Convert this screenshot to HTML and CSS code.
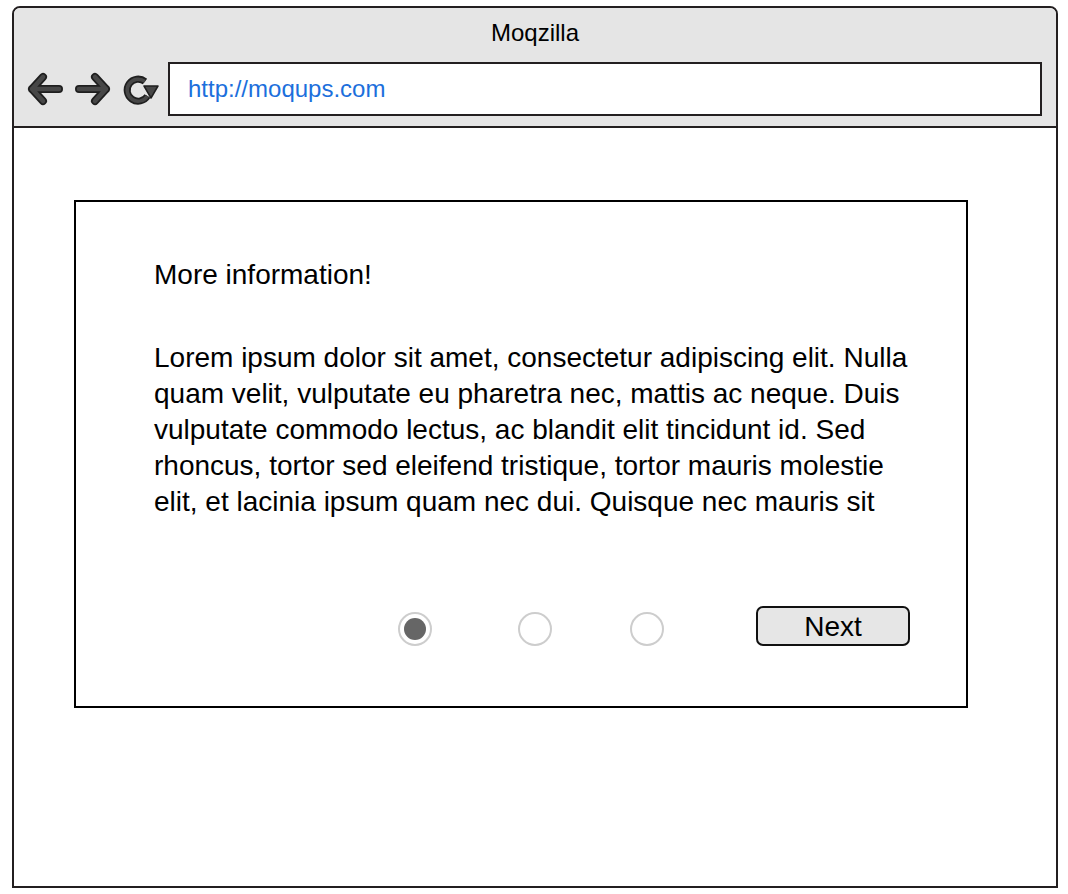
FILE: index.html
```html
<!DOCTYPE html>
<html lang="en">
  <head>
    <meta charset="UTF-8" />
    <title>Moqzilla</title>
    <link rel="stylesheet" href="styles.css">
  </head>
  <body>
    <div class="window">
      <!-- browser chrome -->
      <div class="header">
        <div class="title">Moqzilla</div>
        <div class="toolbar">
          <div class="icons">
            <svg class="icon" width="34" height="34" viewBox="0 0 34 34">
              <path d="M31 17 H4 M15 5 L4 17 L15 29" fill="none" stroke="#1f1f1f" stroke-width="8" stroke-linecap="round" stroke-linejoin="round" />
              <path d="M31 17 H4 M15 5 L4 17 L15 29" fill="none" stroke="#474747" stroke-width="4.5" stroke-linecap="round" stroke-linejoin="round" />
            </svg>
            <svg class="icon" width="34" height="34" viewBox="0 0 34 34">
              <path d="M3 17 H30 M19 5 L30 17 L19 29" fill="none" stroke="#1f1f1f" stroke-width="8" stroke-linecap="round" stroke-linejoin="round" />
              <path d="M3 17 H30 M19 5 L30 17 L19 29" fill="none" stroke="#474747" stroke-width="4.5" stroke-linecap="round" stroke-linejoin="round" />
            </svg>
            <svg class="icon" width="34" height="34" viewBox="0 0 34 34">
              <path d="M21 9.5 A11 11 0 1 0 23.5 24" fill="none" stroke="#1f1f1f" stroke-width="7" />
              <path d="M21 9.5 A11 11 0 1 0 23.5 24" fill="none" stroke="#474747" stroke-width="3.5" />
              <path d="M20 14 L34 14 L27 26 Z" fill="#474747" stroke="#1f1f1f" stroke-width="1.5" stroke-linejoin="round" />
            </svg>
          </div>
          <div class="address">http://moqups.com</div>
        </div>
      </div>

      <!-- page content -->
      <div class="content">
        <div class="card">
          <div class="card-title">More information!</div>
          <p class="card-text">Lorem ipsum dolor sit amet, consectetur adipiscing elit. Nulla quam velit, vulputate eu pharetra nec, mattis ac neque. Duis vulputate commodo lectus, ac blandit elit tincidunt id. Sed rhoncus, tortor sed eleifend tristique, tortor mauris molestie elit, et lacinia ipsum quam nec dui. Quisque nec mauris sit</p>
          <div class="pager">
            <span class="dot dot-1 active"></span>
            <span class="dot dot-2"></span>
            <span class="dot dot-3"></span>
            <div class="btn">Next</div>
          </div>
        </div>
      </div>
    </div>
  </body>
</html>
```

FILE: styles.css
```css
body {
  margin: 0;
  padding: 0;
  background-color: #fff;
  font-family: "Liberation Sans", Arial, sans-serif;
  color: #000;
}

.window {
  width: 1046px;
  height: 882px;
  margin: 6px 0 0 12px;
  box-sizing: border-box;
  border: 2px solid #231f20;
  border-radius: 8px 8px 0 0;
  overflow: hidden;
}

.header {
  height: 120px;
  padding: 13px 14px 0 14px;
  box-sizing: border-box;
  background-color: #e5e5e5;
  border-bottom: 2px solid #231f20;
}

.title {
  font-size: 24px;
  line-height: 24px;
  text-align: center;
}

.toolbar {
  display: flex;
  align-items: center;
  margin-top: 17px;
  height: 54px;
}

.icons {
  display: flex;
  gap: 14px;
  margin-right: 10px;
}

.icon {
  display: block;
  overflow: visible;
}

.address {
  flex: 1;
  height: 54px;
  box-sizing: border-box;
  border: 2px solid #231f20;
  background-color: #fff;
  padding-left: 18px;
  font-size: 24px;
  line-height: 50px;
  color: #1c6fdc;
}

.content {
  padding: 72px 0 0 60px;
}

.card {
  width: 894px;
  height: 508px;
  box-sizing: border-box;
  border: 2px solid #000;
  padding: 55px 0 0 78px;
}

.card-title {
  font-size: 28px;
  line-height: 36px;
}

.card-text {
  width: 765px;
  height: 180px;
  margin: 47px 0 0 0;
  font-size: 28px;
  line-height: 36px;
}

.pager {
  display: flex;
  align-items: flex-end;
  margin-top: 86px;
  height: 40px;
}

.dot {
  display: block;
  width: 34px;
  height: 34px;
  box-sizing: border-box;
  border: 2px solid #cdcdcd;
  border-radius: 50%;
  position: relative;
}

.dot.active::after {
  content: "";
  position: absolute;
  left: 4px;
  top: 4px;
  width: 22px;
  height: 22px;
  border-radius: 50%;
  background-color: #666;
}

.dot-1 {
  margin-left: 244px;
}

.dot-2 {
  margin-left: 86px;
}

.dot-3 {
  margin-left: 78px;
}

.btn {
  width: 154px;
  height: 40px;
  margin-left: 92px;
  box-sizing: border-box;
  border: 2px solid #111;
  border-radius: 7px;
  background-color: #e6e6e6;
  font-size: 28px;
  line-height: 38px;
  text-align: center;
}
```
